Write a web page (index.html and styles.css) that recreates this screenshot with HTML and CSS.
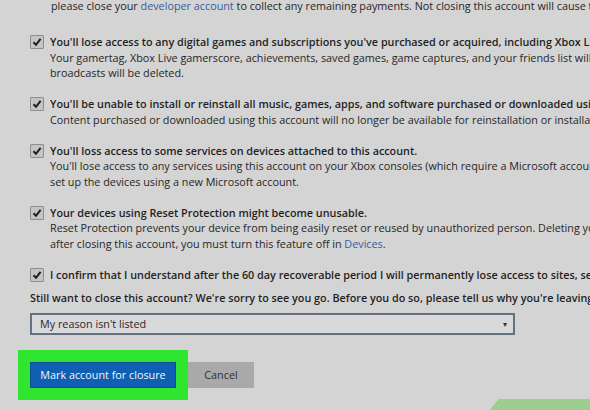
FILE: index.html
```html
<!DOCTYPE html>
<html>
<head>
<meta charset="utf-8">
<link rel="stylesheet" href="styles.css">
</head>
<body>
<div class="page">
  <p class="intro">please close your <span class="link">developer account</span> to collect any remaining payments. Not closing this account will cause the</p>

  <div class="items">
    <div class="item">
      <span class="cb"><svg viewBox="0 0 10 10" width="10" height="10"><path d="M1.5 5.2 L4 7.8 L8.6 1.8" fill="none" stroke="#1e1e1e" stroke-width="2"/></svg></span>
      <div class="txt">
        <div class="b">You'll lose access to any digital games and subscriptions you've purchased or acquired, including Xbox Live</div>
        <div>Your gamertag, Xbox Live gamerscore, achievements, saved games, game captures, and your friends list will be</div>
        <div>broadcasts will be deleted.</div>
      </div>
    </div>
    <div class="item">
      <span class="cb"><svg viewBox="0 0 10 10" width="10" height="10"><path d="M1.5 5.2 L4 7.8 L8.6 1.8" fill="none" stroke="#1e1e1e" stroke-width="2"/></svg></span>
      <div class="txt">
        <div class="b">You'll be unable to install or reinstall all music, games, apps, and software purchased or downloaded using</div>
        <div>Content purchased or downloaded using this account will no longer be available for reinstallation or installation</div>
      </div>
    </div>
    <div class="item">
      <span class="cb"><svg viewBox="0 0 10 10" width="10" height="10"><path d="M1.5 5.2 L4 7.8 L8.6 1.8" fill="none" stroke="#1e1e1e" stroke-width="2"/></svg></span>
      <div class="txt">
        <div class="b">You'll loss access to some services on devices attached to this account.</div>
        <div>You'll lose access to any services using this account on your Xbox consoles (which require a Microsoft account</div>
        <div>set up the devices using a new Microsoft account.</div>
      </div>
    </div>
    <div class="item">
      <span class="cb"><svg viewBox="0 0 10 10" width="10" height="10"><path d="M1.5 5.2 L4 7.8 L8.6 1.8" fill="none" stroke="#1e1e1e" stroke-width="2"/></svg></span>
      <div class="txt">
        <div class="b">Your devices using Reset Protection might become unusable.</div>
        <div>Reset Protection prevents your device from being easily reset or reused by unauthorized person. Deleting your</div>
        <div>after closing this account, you must turn this feature off in <span class="link">Devices</span>.</div>
      </div>
    </div>
    <div class="item">
      <span class="cb"><svg viewBox="0 0 10 10" width="10" height="10"><path d="M1.5 5.2 L4 7.8 L8.6 1.8" fill="none" stroke="#1e1e1e" stroke-width="2"/></svg></span>
      <div class="txt">
        <div class="b">I confirm that I understand after the 60 day recoverable period I will permanently lose access to sites, services</div>
      </div>
    </div>
  </div>

  <p class="still">Still want to close this account? We're sorry to see you go. Before you do so, please tell us why you're leaving.</p>

  <div class="select">
    <span>My reason isn't listed</span>
    <span class="arrow">&#9662;</span>
  </div>

  <div class="actions">
    <div class="highlight"><button class="primary">Mark account for closure</button></div>
    <button class="cancel">Cancel</button>
  </div>
</div>
<div class="watermark"></div>
</body>
</html>
```

FILE: styles.css
```css
html, body {
  margin: 0;
  padding: 0;
  width: 590px;
  height: 410px;
  overflow: hidden;
  background: #d4d4d4;
}

.page {
  position: relative;
  font-family: "Open Sans", "Noto Sans", sans-serif;
  font-size: 10.8px;
  color: #262626;
  white-space: nowrap;
  padding-left: 30px;
}

.intro {
  margin: 0;
  padding-left: 21px;
  line-height: 12px;
}

.link {
  color: #3b5b9b;
}

.items {
  display: flex;
  flex-direction: column;
  gap: 15.5px;
  margin-top: 22px;
}

.item {
  display: flex;
  align-items: flex-start;
  gap: 7px;
}

.cb {
  flex: none;
  width: 12px;
  height: 12px;
  margin-top: 1px;
  border: 1px solid #8e8e8e;
  background: #c4c4c4;
  display: flex;
  align-items: center;
  justify-content: center;
  border-radius: 1px;
  margin-right: -1px;
}

.txt {
  line-height: 15.5px;
  overflow: hidden;
}

.b {
  font-weight: 600;
  color: #1f1f1f;
}

.still {
  margin: 8px 0 0;
  line-height: 15.5px;
  font-weight: 600;
  color: #1f1f1f;
}

.select {
  margin-top: 7px;
  height: 18px;
  border: 2px solid #66717e;
  background: #d9d9dc;
  display: flex;
  align-items: center;
  justify-content: space-between;
  padding: 0 6px 0 8px;
  box-sizing: content-box;
  width: 467px;
}

.arrow {
  font-size: 8px;
  color: #333;
}

.actions {
  display: flex;
  align-items: center;
  margin-top: 15px;
  margin-left: -12px;
}

.highlight {
  background: #2fe52f;
  padding: 12px;
}

button {
  font-family: "Open Sans", "Noto Sans", sans-serif;
  font-size: 10.8px;
  border: none;
  height: 26px;
  margin: 0;
}

.primary {
  width: 146px;
  background: #0f5fb3;
  color: #f2f6fb;
  border: 1px solid #0a4d96;
}

.cancel {
  width: 66px;
  background: #a9a9a9;
  color: #2d2d2d;
}

.watermark {
  position: absolute;
  left: 487px;
  top: 399px;
  width: 110px;
  height: 14px;
  background: #9fcd8f;
  transform: skewX(-40deg);
  transform-origin: bottom left;
}
```
